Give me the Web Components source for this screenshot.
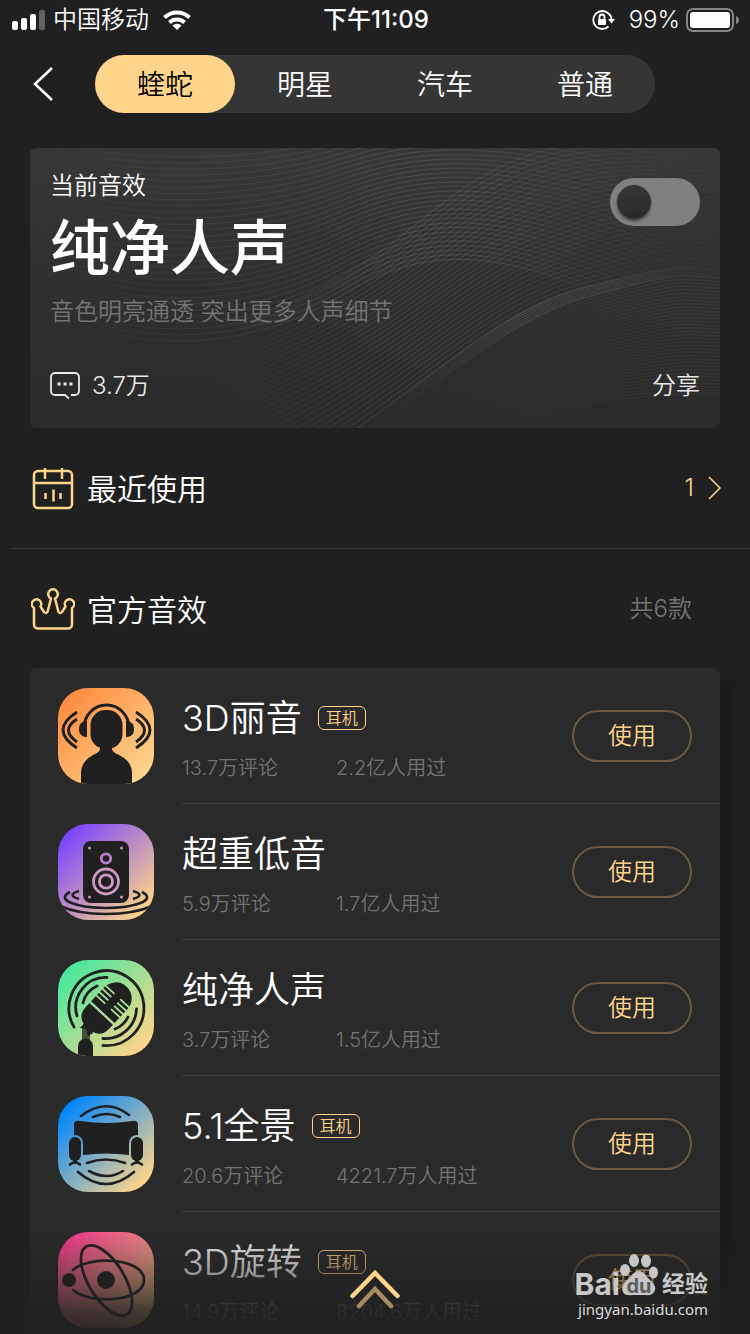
<!DOCTYPE html>
<html lang="zh-CN">
  <head>
    <meta charset="UTF-8" />
    <meta name="viewport" content="width=device-width, initial-scale=1.0" />
    <title>蝰蛇音效</title>
    <style>
      body {
        margin: 0;
        background: #202020;
        color: #fff;
        font-family: Inter, "Noto Sans CJK SC", sans-serif;
        font-weight: 350;
        --gold: #fed48a;
        --muted: #747474;
      }
    </style>
  </head>
  <body>
    <effect-app>
      <status-bar carrier="中国移动" time="下午11:09" battery="99%"></status-bar>
      <tab-bar tabs="蝰蛇,明星,汽车,普通"></tab-bar>
      <current-effect comments="3.7万">
        <span slot="label">当前音效</span>
        <span slot="name">纯净人声</span>
        <span slot="desc">音色明亮通透 突出更多人声细节</span>
      </current-effect>
      <section-title icon="calendar">
        最近使用
        <a slot="extra" href="#recent" aria-label="最近使用 1">1<svg width="14" height="24" viewBox="0 0 14 24" fill="none" stroke="currentColor" stroke-width="1.5"><path d="M1 1l11 11L1 23" /></svg></a>
      </section-title>
      <section-title icon="crown" divided>
        官方音效
        <span slot="extra">共6款</span>
      </section-title>
      <effect-list>
        <effect-item icon="head" tag="耳机" comments="13.7万评论" users="2.2亿人用过">3D丽音</effect-item>
        <effect-item icon="speaker" comments="5.9万评论" users="1.7亿人用过">超重低音</effect-item>
        <effect-item icon="mic" comments="3.7万评论" users="1.5亿人用过">纯净人声</effect-item>
        <effect-item icon="sofa" tag="耳机" comments="20.6万评论" users="4221.7万人用过">5.1全景</effect-item>
        <effect-item icon="orbit" tag="耳机" comments="14.9万评论" users="8204.6万人用过">3D旋转</effect-item>
      </effect-list>
      <pull-up slot="overlay"></pull-up>
      <water-mark slot="overlay"></water-mark>
    </effect-app>
  </body>
  <script>
    // 所有组件的基类：把 render() 返回的内容放进 shadow DOM
    class BaseElement extends HTMLElement {
      constructor() {
        super();
        this.attachShadow({ mode: "open" });
      }
      connectedCallback() {
        this.shadowRoot.innerHTML = this.render();
        this.ready();
      }
      ready() {}
      attr(name) {
        return this.getAttribute(name) || "";
      }
    }

    // 页面外壳
    class EffectApp extends BaseElement {
      render() {
        return `
          <style>
            :host {
              display: block;
              position: relative;
              height: 100vh;
              overflow: hidden;
            }
            main {
              display: flex;
              flex-direction: column;
            }
          </style>
          <main><slot></slot></main>
          <slot name="overlay"></slot>
        `;
      }
    }
    customElements.define("effect-app", EffectApp);

    // 顶部状态栏
    class StatusBar extends BaseElement {
      render() {
        return `
          <style>
            :host {
              display: grid;
              grid-template-columns: 1fr auto 1fr;
              align-items: center;
              height: 40px;
              padding: 0 10px 0 12px;
              font-size: 24px;
              line-height: 40px;
            }
            div {
              display: flex;
              align-items: center;
            }
            .left { gap: 8px; }
            .left .wifi { margin-left: 6px; }
            .right { justify-content: flex-end; gap: 6px; }
            .right .lock { margin-right: 8px; }
            .time { font-weight: 500; }
            svg { display: block; }
          </style>
          <div class="left">
            <svg width="33" height="20" viewBox="0 0 33 20" fill="#fff">
              <rect x="0" y="11" width="6" height="9" rx="2" />
              <rect x="9" y="8" width="6" height="12" rx="2" />
              <rect x="18" y="4" width="6" height="16" rx="2" />
              <rect x="27" y="0" width="6" height="20" rx="2" opacity=".3" />
            </svg>
            <span>${this.attr("carrier")}</span>
            <svg class="wifi" width="28" height="20" viewBox="0 0 28 20" fill="none" stroke="#fff" stroke-width="4">
              <path d="M1.500 7.500a18 18 0 0 1 25 0" />
              <path d="M6.500 12.500a11 11 0 0 1 15 0" />
              <path d="M14 20l-4.500-4.500a6.500 6.500 0 0 1 9 0z" fill="#fff" stroke="none" />
            </svg>
          </div>
          <div class="time">${this.attr("time")}</div>
          <div class="right">
            <svg class="lock" width="23" height="20" viewBox="0 0 23 20" fill="none" stroke="#fff" stroke-width="1.800">
              <path d="M16.500 3.500a9 9 0 1 0 0 13M16.500 3.500Q19.500 6 19.500 9.500" />
              <path d="M16 9h7l-3.500 4.500z" fill="#fff" stroke="none" />
              <rect x="6" y="9" width="8" height="6" rx="1" fill="#fff" stroke="none" />
              <path d="M7.500 9.500V7a2.500 2.500 0 0 1 5 0v2.500" />
            </svg>
            <span>${this.attr("battery")}</span>
            <svg width="54" height="24" viewBox="0 0 54 24">
              <rect x="1" y="1" width="46" height="22" rx="6" fill="none" stroke="#868686" stroke-width="2" />
              <rect x="4" y="4" width="40" height="16" rx="3" fill="#fff" />
              <path d="M50 8q3 1 3 4t-3 4z" fill="#868686" />
            </svg>
          </div>
        `;
      }
    }
    customElements.define("status-bar", StatusBar);

    // 返回按钮和分类标签
    class TabBar extends BaseElement {
      render() {
        const tabs = this.attr("tabs").split(",");
        return `
          <style>
            :host {
              display: flex;
              align-items: center;
              height: 88px;
              padding-right: 95px;
            }
            button {
              padding: 0;
              border: 0;
              background: none;
              color: inherit;
              font: inherit;
              cursor: pointer;
            }
            .back {
              display: flex;
              flex: 0 0 95px;
              padding-left: 32px;
              box-sizing: border-box;
            }
            nav {
              display: flex;
              flex: 1;
              height: 58px;
              border-radius: 29px;
              background: #353535;
            }
            nav button {
              flex: 1;
              border-radius: 29px;
              padding-top: 2px;
              font-size: 28px;
              line-height: 56px;
            }
            nav button[aria-selected="true"] {
              background: var(--gold);
              color: #000;
            }
          </style>
          <button class="back" aria-label="返回">
            <svg width="22" height="36" viewBox="0 0 22 36" fill="none" stroke="#fff" stroke-width="2.500"><path d="M20 2L3 18l17 16" /></svg>
          </button>
          <nav role="tablist">
            ${tabs.map((t, i) => `<button role="tab" aria-selected="${i === 0}">${t}</button>`).join("")}
          </nav>
        `;
      }
      ready() {
        const tabs = this.shadowRoot.querySelectorAll("nav button");
        tabs.forEach((tab) => {
          tab.onclick = () => tabs.forEach((t) => t.setAttribute("aria-selected", t === tab));
        });
      }
    }
    customElements.define("tab-bar", TabBar);

    // 在两条曲线之间插值，得到一组波纹线
    function waves(from, to, count, stroke) {
      let paths = "";
      for (let i = 0; i <= count; i++) {
        const p = from.map((v, k) => Math.round((v + ((to[k] - v) * i) / count) * 10) / 10);
        paths += `<path d="M${p[0]} ${p[1]}C${p.slice(2, 8).join(" ")}S${p.slice(8).join(" ")}" />`;
      }
      return `<g stroke="url(#${stroke})">${paths}</g>`;
    }

    // 当前音效卡片
    class CurrentEffect extends BaseElement {
      render() {
        // 亮弧线及其下方的边界
        const arc = [250, 330, 400, 240, 460, 162, 560, 138, 640, 118, 690, 122];
        const arcInner = [256, 336, 406, 246, 468, 172, 564, 147, 640, 128, 690, 130];
        return `
          <style>
            :host {
              display: grid;
              margin: 20px 30px 0;
              border-radius: 6px;
              overflow: hidden;
              background: linear-gradient(#373737, #2f2f2f 50%, #2a2a2a);
            }
            .bg, .content { grid-area: 1 / 1; }
            .bg {
              width: 100%;
              height: 280px;
            }
            .content {
              position: relative;
              display: flex;
              flex-direction: column;
              height: 280px;
              padding: 22px 20px 20px;
              box-sizing: border-box;
            }
            .row {
              display: flex;
              justify-content: space-between;
            }
            .label { font-size: 24px; line-height: 32px; }
            .name {
              font-size: 60px;
              font-weight: 500;
              line-height: 64px;
            }
            .text {
              display: flex;
              flex-direction: column;
              gap: 14px;
            }
            .desc {
              margin-top: 16px;
              color: var(--muted);
              font-size: 24px;
              line-height: 32px;
            }
            .foot {
              margin-top: auto;
              font-size: 24px;
              line-height: 44px;
              color: #e9e9e9;
            }
            .foot button {
              display: flex;
              align-items: center;
              gap: 12px;
              padding: 0;
              border: 0;
              background: none;
              color: inherit;
              font: inherit;
              cursor: pointer;
            }
            input {
              appearance: none;
              display: flex;
              flex: none;
              align-items: center;
              width: 90px;
              height: 48px;
              margin: 8px 0 0;
              padding: 0 7px;
              box-sizing: border-box;
              border-radius: 24px;
              background: #808080;
              cursor: pointer;
            }
            input::before {
              content: "";
              width: 34px;
              height: 34px;
              border-radius: 50%;
              background: linear-gradient(#373737, #292929);
              box-shadow: 0 2px 3px rgba(0, 0, 0, 0.5);
            }
            input:checked { justify-content: flex-end; background: var(--gold); }
          </style>
          <svg class="bg" viewBox="0 0 690 280" preserveAspectRatio="none" fill="none">
            <defs>
              <linearGradient id="wa" gradientUnits="userSpaceOnUse" x1="0" y1="0" x2="690" y2="0">
                <stop offset="0" stop-color="#fff" stop-opacity=".01" />
                <stop offset=".3" stop-color="#fff" stop-opacity=".06" />
                <stop offset=".58" stop-color="#fff" stop-opacity=".11" />
                <stop offset=".85" stop-color="#fff" stop-opacity=".03" />
                <stop offset="1" stop-color="#fff" stop-opacity="0" />
              </linearGradient>
              <linearGradient id="wb" gradientUnits="userSpaceOnUse" x1="340" y1="250" x2="680" y2="60">
                <stop offset="0" stop-color="#fff" stop-opacity="0" />
                <stop offset=".2" stop-color="#fff" stop-opacity=".06" />
                <stop offset=".45" stop-color="#fff" stop-opacity=".14" />
                <stop offset=".8" stop-color="#fff" stop-opacity=".04" />
                <stop offset="1" stop-color="#fff" stop-opacity="0" />
              </linearGradient>
              <linearGradient id="wd" gradientUnits="userSpaceOnUse" x1="180" y1="0" x2="640" y2="0">
                <stop offset="0" stop-color="#fff" stop-opacity="0" />
                <stop offset=".45" stop-color="#fff" stop-opacity=".12" />
                <stop offset="1" stop-color="#fff" stop-opacity=".02" />
              </linearGradient>
              <linearGradient id="wc" gradientUnits="userSpaceOnUse" x1="400" y1="280" x2="600" y2="120">
                <stop offset="0" stop-color="#fff" stop-opacity="0" />
                <stop offset="1" stop-color="#fff" stop-opacity=".05" />
              </linearGradient>
            </defs>
            ${waves([0, 150, 70, 200, 200, 215, 310, 148, 500, 110, 690, 200], [0, -10, 70, 10, 200, 20, 310, -10, 500, -20, 690, 0], 30, "wa")}
            ${waves([100, 200, 320, 160, 370, 80, 440, 36, 560, -10, 690, -6], arc, 30, "wd")}
            ${waves(arc, arcInner, 5, "wb")}
            ${waves(arcInner, [440, 300, 500, 270, 540, 256, 600, 250, 660, 246, 690, 246], 34, "wc")}
          </svg>
          <div class="content">
            <div class="row">
              <div class="text">
                <div class="label"><slot name="label"></slot></div>
                <div class="name"><slot name="name"></slot></div>
              </div>
              <input type="checkbox" role="switch" aria-label="音效开关" />
            </div>
            <div class="desc"><slot name="desc"></slot></div>
            <div class="row foot">
              <button>
                <svg width="30" height="28" viewBox="0 0 30 28" fill="none" stroke="currentColor" stroke-width="1.800">
                  <path d="M21 23h4a4 4 0 0 0 4-4V5a4 4 0 0 0-4-4H5a4 4 0 0 0-4 4v14a4 4 0 0 0 4 4h10l4 3.500" />
                  <path d="M9 10.500v3M15 10.500v3M21 10.500v3" stroke-width="3" />
                </svg>
                <span>${this.attr("comments")}</span>
              </button>
              <button>分享</button>
            </div>
          </div>
        `;
      }
    }
    customElements.define("current-effect", CurrentEffect);

    // 小节标题
    class SectionTitle extends BaseElement {
      render() {
        const icons = {
          calendar: `
            <rect x="3" y="5" width="38" height="37" rx="4" />
            <path d="M14 2v11M31 2v11M3 17h38M14.500 27v6M22.500 23.500v12M29.500 27v6" />`,
          crown: `<path stroke-linejoin="round" d="M3 21v16.500a4 4 0 0 0 4 4h30a4 4 0 0 0 4-4V21a4.700 4.700 0 1 0-6.500-1.500L31 25q-1.800 2-3.500 0l-3.500-13.500a4.800 4.800 0 1 0-4 0L16.500 25q-1.700 2-3.500 0l-3.500-5.500A4.700 4.700 0 1 0 3 21z" />`,
        };
        return `
          <style>
            :host {
              display: flex;
              align-items: center;
              gap: 12px;
              height: 120px;
              margin-left: 10px;
              padding: 0 28px 0 21px;
              box-sizing: border-box;
              font-size: 30px;
              line-height: 40px;
            }
            :host([divided]) { border-top: 1px solid #353535; }
            h2 {
              flex: 1;
              margin: 0;
              padding-top: 2px;
              font: inherit;
            }
            ::slotted([slot="extra"]) {
              display: flex;
              align-items: center;
              gap: 14px;
              padding-right: 30px;
              font-size: 24px;
              color: var(--muted);
              text-decoration: none;
            }
            ::slotted(a) {
              padding-right: 0 !important;
              color: var(--gold) !important;
            }
          </style>
          <svg width="44" height="44" viewBox="0 0 44 44" fill="none" stroke="#fed48a" stroke-width="2.500">${icons[this.attr("icon")]}</svg>
          <h2><slot></slot></h2>
          <slot name="extra"></slot>
        `;
      }
    }
    customElements.define("section-title", SectionTitle);

    // 音效列表
    class EffectList extends BaseElement {
      render() {
        return `
          <style>
            :host {
              display: block;
              margin: 0 30px;
              border-radius: 6px;
              background: #2a2a2a;
              box-shadow: 12px 12px 12px rgba(0, 0, 0, 0.2);
            }
          </style>
          <slot></slot>
        `;
      }
    }
    customElements.define("effect-list", EffectList);

    // 音效图标：左上角颜色 + 图形，c 为深色
    const c = "#202020";
    const ICONS = {
      head: ["#ff8c40", `
        <path d="M26 40a22.500 23 0 0 1 45 0" fill="none" stroke="${c}" stroke-width="3" />
        <path d="M29 33v16h-1a7 7 0 0 1-7-7v-2a7 7 0 0 1 7-7zM68 33v16h1a7 7 0 0 0 7-7v-2a7 7 0 0 0-7-7z" />
        <rect x="32.500" y="22" width="32" height="39" rx="15" />
        <path d="M42 56h12v5q0 2 3 4 17 7 17 20v11H23V85q0-13 16-20 3-2 3-4z" />
        <path d="M19 24Q-9 42 19 60M19 31q-17 11 0 23M78 24q28 18 0 36M78 31q17 11 0 23" fill="none" stroke="${c}" stroke-width="3" />`],
      speaker: ["#7b46ff", `
        <rect x="25" y="17" width="46" height="62" rx="8" />
        <g fill="#c48bc4"><circle cx="31.500" cy="24" r="1.600" /><circle cx="63.500" cy="24" r="1.600" /><circle cx="31.500" cy="73" r="1.600" /><circle cx="63.500" cy="73" r="1.600" /></g>
        <g fill="none" stroke="#cf98c0" stroke-width="2.800"><circle cx="48" cy="34.500" r="4.700" stroke="#b97fd0" /><circle cx="48" cy="57.500" r="12.500" /><circle cx="48" cy="57.500" r="6.600" /></g>
        <path d="M21 67q-13 4 0 8M75 67q13 4 0 8M12 68C-4 76 20 84 48 84S100 76 84 68M2 82q18 8 46 8t46-8" fill="none" stroke="${c}" stroke-width="2.600" />`],
      mic: ["#48e89d", `
        <g fill="none" stroke="${c}" stroke-width="2.800" stroke-linecap="round">
          <path d="M16 67A37.500 37.500 0 1 1 45 85.500" />
          <path d="M19 56A30 30 0 0 1 49 17.500M78.500 49A31 31 0 0 1 45 78.500" />
          <path d="M25 43a25 25 0 0 1 14-17M70 57a24 24 0 0 1-13 12" />
        </g>
        <g transform="translate(44 53) rotate(43)">
          <path d="M-16-1.200V-20a16 16 0 0 1 32 0v18.800zM-16 1.200h32V6q0 15-16 15T-16 6z" />
          <path d="M-17-9h13M-17-13.500h13M-17-18h13M-17-22.500h13M17-9H4M17-13.500H4M17-18H4M17-22.500H4" stroke="#a6df95" stroke-width="1.800" />
        </g>
        <path d="M24 67h8v14h-8z" opacity=".75" />
        <path d="M22 68l6-7 7 12-5 3-2-7z" />
        <path d="M20 96V86a7.500 7.500 0 0 1 15 0v10z" />`],
      sofa: ["#0086ff", `
        <path d="M16 29q0-5 6-4 26 4 52 0 6-1 6 4v10q-9 0-9 9v11q-23-3-46 0V48q0-9-9-9z" />
        <rect x="11" y="41" width="12" height="24" rx="6" />
        <rect x="73" y="41" width="12" height="24" rx="6" />
        <path d="M15 63h4v3h-4zM77 63h4v3h-4z" />
        <g fill="none" stroke="${c}" stroke-width="2.600" stroke-linecap="round">
          <path d="M12 68.500q5-4 10 0M74 68.500q5-4 10 0" />
          <path d="M23 20q25-19 48-1M35 21q14-6 27 0M29 67q19-7 38 0M31 75q18 10 34 0M20 76q28 24 56 0" />
        </g>`],
      orbit: ["#ff4190", `
        <circle cx="48" cy="48" r="9" /><circle cx="11" cy="48" r="7" />
        <g fill="none" stroke="${c}" stroke-width="2.800" stroke-linecap="round">
          <path d="M15 38C32 23 86 26 86 48S32 73 15 58" />
          <ellipse cx="48.500" cy="48.500" rx="18" ry="39.500" transform="rotate(-31 48.500 48.500)" />
        </g>`],
    };

    // 列表中的一项
    class EffectItem extends BaseElement {
      render() {
        const [color, shape] = ICONS[this.attr("icon")];
        return `
          <style>
            :host {
              display: flex;
              align-items: center;
              gap: 28px;
              height: 136px;
              padding-left: 28px;
            }
            .icon {
              flex: none;
              border-radius: 30px;
            }
            .body {
              display: flex;
              flex: 1;
              align-items: center;
              justify-content: space-between;
              height: 136px;
              padding: 1px 28px 0 0;
              box-sizing: border-box;
              border-bottom: 1px solid #404040;
            }
            .info {
              display: flex;
              flex-direction: column;
              gap: 8px;
            }
            h3 {
              display: flex;
              align-items: center;
              gap: 16px;
              margin: 0;
              font-size: 36px;
              font-weight: inherit;
              line-height: 56px;
            }
            .tag {
              padding: 0 7px;
              border: 1px solid var(--gold);
              border-radius: 6px;
              color: var(--gold);
              font-size: 16px;
              line-height: 22px;
            }
            .meta {
              display: grid;
              grid-template-columns: 154px auto;
              color: var(--muted);
              font-size: 20px;
              line-height: 28px;
            }
            button {
              width: 120px;
              height: 52px;
              padding: 0;
              border: 2px solid #695a42;
              border-radius: 26px;
              background: none;
              color: var(--gold);
              font: inherit;
              font-size: 24px;
              line-height: 48px;
              cursor: pointer;
            }
          </style>
          <svg class="icon" width="96" height="96" viewBox="0 0 96 96" fill="${c}">
            <defs>
              <linearGradient id="g" x1="0.100" y1="0.100" x2="0.900" y2="0.900">
                <stop offset="0" stop-color="${color}" />
                <stop offset="1" stop-color="#fdd48b" />
              </linearGradient>
            </defs>
            <rect width="96" height="96" fill="url(#g)" />
            ${shape}
          </svg>
          <div class="body">
            <div class="info">
              <h3><span><slot></slot></span>${this.attr("tag") && `<span class="tag">${this.attr("tag")}</span>`}</h3>
              <div class="meta"><span>${this.attr("comments")}</span><span>${this.attr("users")}</span></div>
            </div>
            <button>使用</button>
          </div>
        `;
      }
    }
    customElements.define("effect-item", EffectItem);

    // 底部渐隐遮罩和上拉箭头
    class PullUp extends BaseElement {
      render() {
        return `
          <style>
            :host {
              position: absolute;
              inset: auto 0 0;
              display: flex;
              align-items: flex-end;
              justify-content: center;
              height: 110px;
              background: linear-gradient(rgba(32, 32, 32, 0), rgba(32, 32, 32, 0.85) 80%, rgba(32, 32, 32, 0.95));
            }
            button {
              margin-bottom: 24px;
              padding: 0;
              border: 0;
              background: none;
              cursor: pointer;
            }
            svg { display: block; }
          </style>
          <button aria-label="展开">
            <svg width="50" height="40" viewBox="0 0 50 40" fill="none" stroke="#fed48a" stroke-width="4.500" stroke-linecap="round">
              <path d="M9 36l16-17 16 17" opacity=".6" />
              <path d="M2.500 26L25 3l22.500 23" />
            </svg>
          </button>
        `;
      }
    }
    customElements.define("pull-up", PullUp);

    // 右下角水印
    class WaterMark extends BaseElement {
      render() {
        return `
          <style>
            :host {
              position: absolute;
              right: 42px;
              bottom: 16px;
              color: rgba(255, 255, 255, 0.75);
              font-weight: 700;
              pointer-events: none;
            }
            .logo {
              display: flex;
              align-items: flex-end;
              justify-content: flex-end;
              font-size: 30px;
              line-height: 32px;
            }
            .paw {
              display: grid;
              width: 38px;
              margin-right: 4px;
              justify-items: center;
              align-items: end;
            }
            .paw > * { grid-area: 1 / 1; }
            .paw svg { margin-bottom: 4px; }
            .paw span {
              color: #5c5c5c;
              font-size: 20px;
              line-height: 28px;
            }
            .cn { font-size: 23px; }
            .url {
              font: 400 15px/18px "Noto Sans", sans-serif;
              color: rgba(255, 255, 255, 0.85);
              text-align: right;
            }
          </style>
          <div class="logo">
            <span>Bai</span>
            <span class="paw">
              <svg width="38" height="42" viewBox="0 0 38 42" fill="#c6c6c6">
                <ellipse cx="5" cy="16" rx="5" ry="6" />
                <ellipse cx="14" cy="6.500" rx="5" ry="6.500" />
                <ellipse cx="26" cy="7" rx="5" ry="6.500" />
                <ellipse cx="33.500" cy="18.500" rx="4.500" ry="6" />
                <path d="M19 17q4 0 7 5l7 7q4 5 1 9t-8 3H12q-7 1-9-3t1-9l7-7q4-5 8-5z" />
              </svg>
              <span>du</span>
            </span>
            <span class="cn">经验</span>
          </div>
          <div class="url">jingyan.baidu.com</div>
        `;
      }
    }
    customElements.define("water-mark", WaterMark);
  </script>
</html>
